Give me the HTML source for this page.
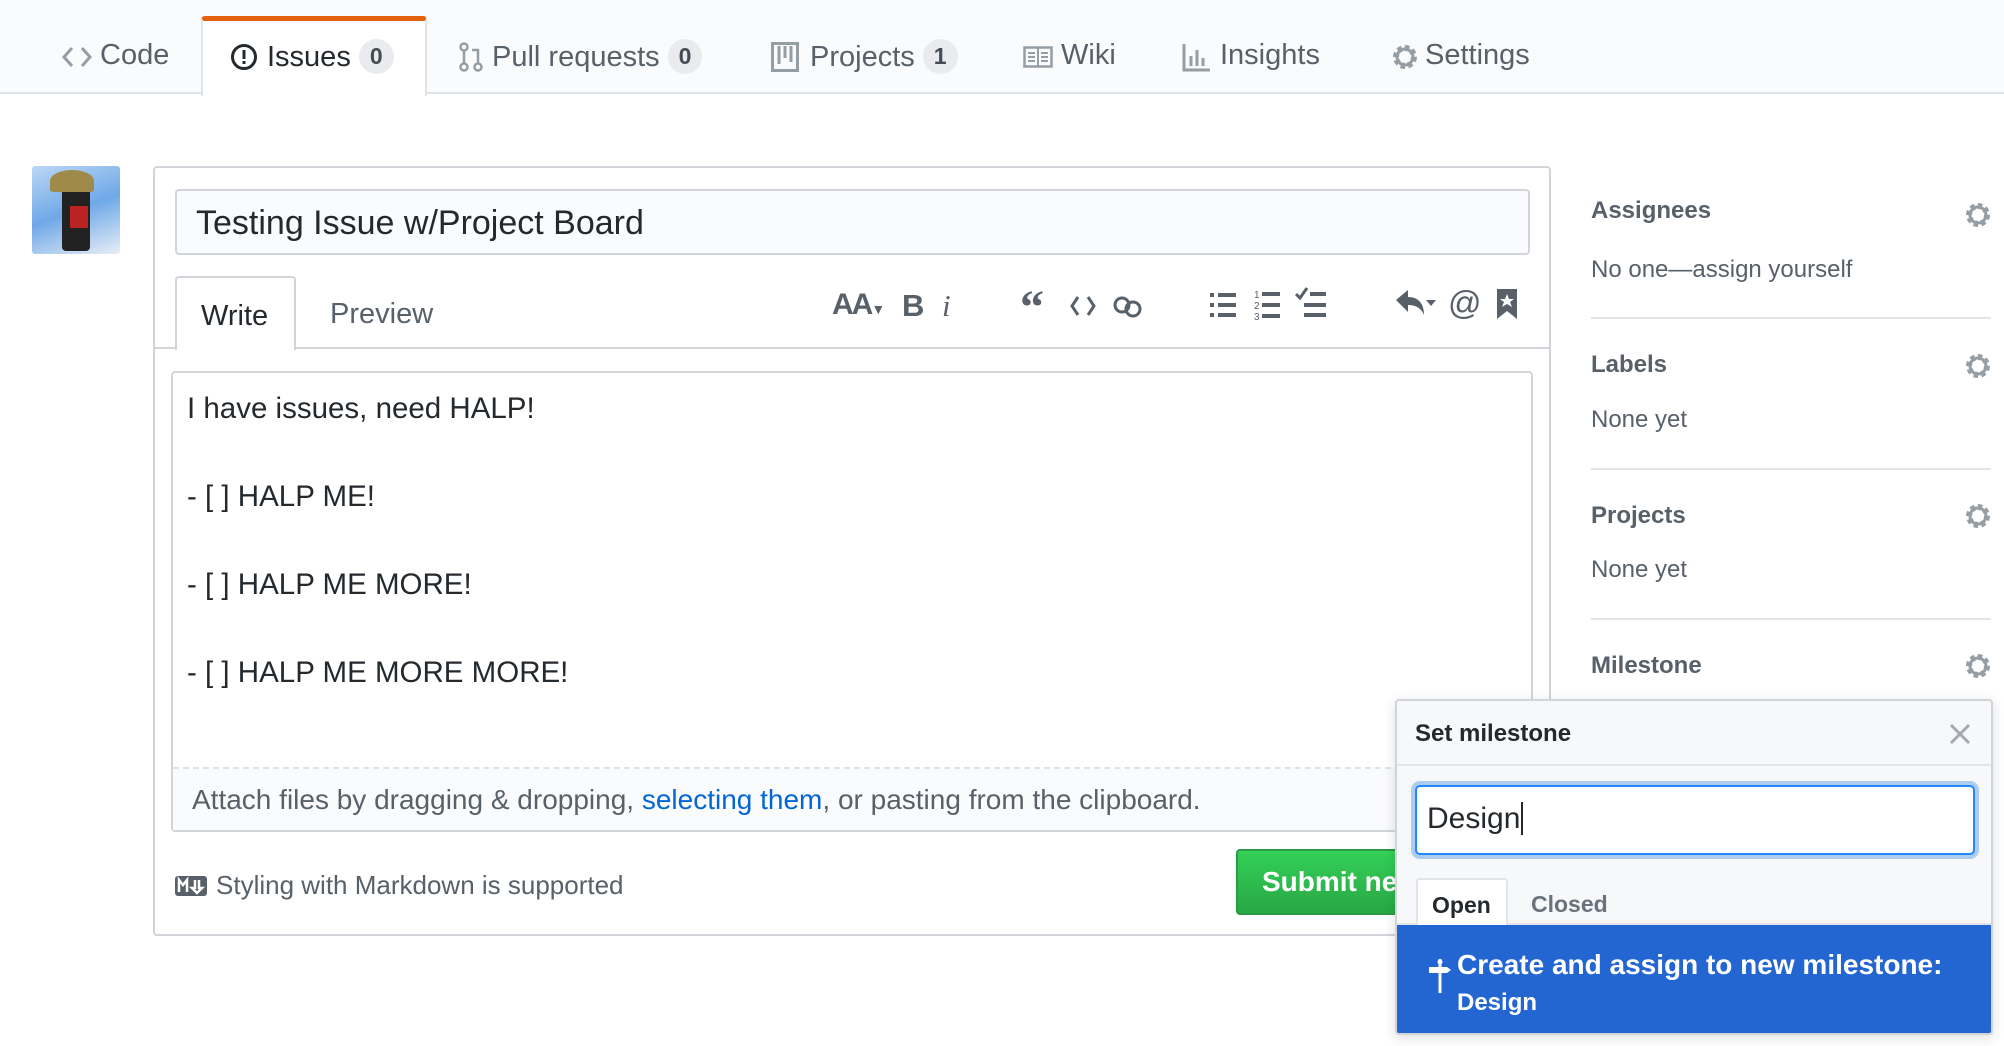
<!DOCTYPE html>
<html><head><meta charset="utf-8"><style>
*{box-sizing:border-box;margin:0;padding:0}
body{width:2004px;height:1046px;background:#fff;font-family:"Liberation Sans",Arial,sans-serif;color:#24292e;position:relative;overflow:hidden}
.a{position:absolute}
.nav{left:0;top:0;width:2004px;height:94px;background:#fafbfc;border-bottom:2px solid #e1e4e8}
.tab{font-size:29px;color:#586069;top:39px;white-space:nowrap}
.cnt{display:inline-block;background:#e9ebee;color:#444d56;border-radius:20px;font-size:23px;font-weight:bold;padding:4px 11px;vertical-align:2px;margin-left:8px}
.sh{font-size:24px;font-weight:bold;color:#586069}
.sv{font-size:24px;color:#586069}
.div{height:2px;background:#e1e4e8;left:1591px;width:400px}
</style></head><body>
<div class="a nav"></div>
<div class="a" style="left:201px;top:16px;width:226px;height:80px;background:#fff;border:2px solid #e1e4e8;border-top:5px solid #e36209;border-bottom:none;border-radius:4px 4px 0 0"></div>
<svg class="a" style="left:62px;top:46px" width="30" height="22" viewBox="0 0 30 22"><path d="M10 2L2 11l8 9M20 2l8 9-8 9" stroke="#959da5" stroke-width="3" fill="none"/></svg>
<div class="a tab" style="left:100px">Code</div>
<svg class="a" style="left:230px;top:43px" width="28" height="28"><circle cx="14" cy="14" r="11.5" stroke="#24292e" stroke-width="3" fill="none"/><rect x="12.5" y="7" width="3" height="9" fill="#24292e"/><rect x="12.5" y="18" width="3" height="3" fill="#24292e"/></svg>
<div class="a tab" style="left:267px;color:#24292e">Issues<span class="cnt">0</span></div>
<svg class="a" style="left:458px;top:42px" width="26" height="30"><circle cx="6" cy="5" r="3.5" stroke="#959da5" stroke-width="2.5" fill="none"/><circle cx="6" cy="25" r="3.5" stroke="#959da5" stroke-width="2.5" fill="none"/><circle cx="20" cy="25" r="3.5" stroke="#959da5" stroke-width="2.5" fill="none"/><path d="M6 9v12M20 21V8h-6" stroke="#959da5" stroke-width="2.5" fill="none"/></svg>
<div class="a tab" style="left:492px">Pull requests<span class="cnt">0</span></div>
<svg class="a" style="left:771px;top:42px" width="28" height="30"><rect x="1.5" y="1.5" width="25" height="27" stroke="#959da5" stroke-width="3" fill="none"/><path d="M8 4v18M14 4v12M20 4v16" stroke="#959da5" stroke-width="3"/></svg>
<div class="a tab" style="left:810px">Projects<span class="cnt">1</span></div>
<svg class="a" style="left:1023px;top:46px" width="30" height="22"><rect x="1.5" y="1.5" width="27" height="19" stroke="#959da5" stroke-width="2.5" fill="none"/><path d="M15 2v18M5 7h7M5 11h7M5 15h7M18 7h7M18 11h7M18 15h7" stroke="#959da5" stroke-width="2"/></svg>
<div class="a tab" style="left:1061px">Wiki</div>
<svg class="a" style="left:1182px;top:42px" width="30" height="30"><path d="M2 2v26h26" stroke="#959da5" stroke-width="3" fill="none"/><path d="M9 24V14M15 24V8M21 24V16" stroke="#959da5" stroke-width="3"/></svg>
<div class="a tab" style="left:1220px">Insights</div>
<svg class="a" style="left:1390px;top:42px" width="30" height="30" viewBox="0 0 30 30"><circle cx="15" cy="15" r="9" fill="none" stroke="#959da5" stroke-width="6" stroke-dasharray="4 3"/><circle cx="15" cy="15" r="8" fill="none" stroke="#959da5" stroke-width="3"/></svg>
<div class="a tab" style="left:1425px">Settings</div>

<div class="a" style="left:32px;top:166px;width:88px;height:88px;background:linear-gradient(160deg,#bcd7f5,#6fa8e8 50%,#e8eef5);border-radius:3px;overflow:hidden"><div class="a" style="left:30px;top:10px;width:28px;height:75px;background:#222;border-radius:12px 12px 4px 4px"></div><div class="a" style="left:18px;top:4px;width:44px;height:22px;background:#a08a4a;border-radius:50% 50% 10% 10%"></div><div class="a" style="left:38px;top:40px;width:18px;height:22px;background:#b22"></div></div>

<div class="a" style="left:153px;top:166px;width:1398px;height:770px;border:2px solid #d1d5da;border-radius:4px"></div>
<div class="a" style="left:175px;top:189px;width:1355px;height:66px;background:#fafbfc;border:2px solid #d1d5da;border-radius:4px;font-size:34px;padding:13px 19px">Testing Issue w/Project Board</div>
<div class="a" style="left:155px;top:347px;width:1394px;height:2px;background:#d1d5da"></div>
<div class="a" style="left:175px;top:276px;width:121px;height:74px;background:#fff;border:2px solid #d1d5da;border-bottom:none;border-radius:4px 4px 0 0;font-size:29px;padding:22px 0 0 24px">Write</div>
<div class="a" style="left:330px;top:298px;font-size:29px;color:#586069">Preview</div>
<div class="a" style="left:832px;top:288px;font-size:30px;color:#586069;font-weight:bold;letter-spacing:-2px">AA<span style="font-size:14px">▼</span></div>
<div class="a" style="left:902px;top:288px;font-size:31px;color:#586069;font-weight:bold">B</div>
<div class="a" style="left:942px;top:288px;font-size:31px;color:#586069;font-style:italic;font-family:'Liberation Serif',serif">i</div>
<div class="a" style="left:1020px;top:280px;font-size:48px;color:#586069;font-weight:bold;font-family:'Liberation Serif',serif">“</div>
<svg class="a" style="left:1070px;top:295px" width="26" height="22"><path d="M8 2L2 11l6 9M18 2l6 9-6 9" stroke="#586069" stroke-width="3" fill="none"/></svg>
<svg class="a" style="left:1112px;top:294px" width="32" height="26"><circle cx="10" cy="11" r="7" stroke="#586069" stroke-width="3" fill="none"/><circle cx="21" cy="15" r="7" stroke="#586069" stroke-width="3" fill="none"/></svg>
<svg class="a" style="left:1210px;top:290px" width="28" height="30"><g fill="#586069"><rect x="0" y="3" width="4" height="4"/><rect x="0" y="13" width="4" height="4"/><rect x="0" y="23" width="4" height="4"/><rect x="8" y="3" width="18" height="4"/><rect x="8" y="13" width="18" height="4"/><rect x="8" y="23" width="18" height="4"/></g></svg>
<svg class="a" style="left:1254px;top:288px" width="28" height="32"><g fill="#586069"><text x="0" y="10" font-size="10" font-family="Liberation Sans">1</text><text x="0" y="21" font-size="10" font-family="Liberation Sans">2</text><text x="0" y="32" font-size="10" font-family="Liberation Sans">3</text><rect x="8" y="4" width="18" height="4"/><rect x="8" y="15" width="18" height="4"/><rect x="8" y="26" width="18" height="4"/></g></svg>
<svg class="a" style="left:1294px;top:286px" width="34" height="34"><path d="M2 8l4 4 7-10" stroke="#586069" stroke-width="3" fill="none"/><g fill="#586069"><rect x="16" y="6" width="16" height="4"/><rect x="10" y="17" width="22" height="4"/><rect x="10" y="27" width="22" height="4"/></g></svg>
<svg class="a" style="left:1394px;top:288px" width="44" height="34"><path d="M2 12L14 2v7c10 0 16 6 16 18-3-7-8-10-16-10v7z" fill="#586069"/><path d="M32 12h10l-5 6z" fill="#586069"/></svg>
<div class="a" style="left:1448px;top:284px;font-size:33px;color:#586069">@</div>
<svg class="a" style="left:1496px;top:288px" width="22" height="32"><path d="M1 1h20v30l-10-8-10 8z" fill="#586069"/><path d="M11 6l2 5h5l-4 3 2 5-5-3-5 3 2-5-4-3h5z" fill="#fff"/></svg>

<div class="a" style="left:171px;top:371px;width:1362px;height:461px;border:2px solid #d1d5da;border-radius:4px"></div>
<div class="a" style="left:173px;top:767px;width:1358px;border-top:2px dashed #dfe2e5"></div>
<div class="a" style="left:173px;top:769px;width:1358px;height:61px;background:#fafbfc"></div>
<div class="a" style="left:187px;top:365px;font-size:29.5px;line-height:88px">I have issues, need HALP!<br>- [ ] HALP ME!<br>- [ ] HALP ME MORE!<br>- [ ] HALP ME MORE MORE!</div>
<div class="a" style="left:192px;top:784px;font-size:28px;color:#586069">Attach files by dragging &amp; dropping, <span style="color:#0366d6">selecting them</span>, or pasting from the clipboard.</div>
<svg class="a" style="left:175px;top:876px" width="32" height="20"><rect width="32" height="20" rx="3" fill="#586069"/><path d="M4 16V4l4 5 4-5v12M20 4v8h-3l5 5 5-5h-3V4" stroke="#fff" stroke-width="2.5" fill="none"/></svg>
<div class="a" style="left:216px;top:870px;font-size:26px;color:#586069">Styling with Markdown is supported</div>
<div class="a" style="left:1236px;top:849px;width:200px;height:66px;background:linear-gradient(#34d058,#28a745);border:2px solid #2a9c45;border-radius:4px;color:#fff;font-size:28px;font-weight:bold;padding:15px 24px;white-space:nowrap;overflow:hidden">Submit new issue</div>

<div class="a sh" style="left:1591px;top:197px">Assignees</div>
<div class="a sv" style="left:1591px;top:256px">No one—assign yourself</div>
<div class="a div" style="top:317px"></div>
<div class="a sh" style="left:1591px;top:351px">Labels</div>
<div class="a sv" style="left:1591px;top:406px">None yet</div>
<div class="a div" style="top:468px"></div>
<div class="a sh" style="left:1591px;top:502px">Projects</div>
<div class="a sv" style="left:1591px;top:556px">None yet</div>
<div class="a div" style="top:618px"></div>
<div class="a sh" style="left:1591px;top:652px">Milestone</div>
<svg class="a" style="left:1963px;top:200px" width="30" height="30"><circle cx="15" cy="15" r="9" fill="none" stroke="#959da5" stroke-width="6" stroke-dasharray="4 3"/><circle cx="15" cy="15" r="8" fill="none" stroke="#959da5" stroke-width="3"/></svg>
<svg class="a" style="left:1963px;top:351px" width="30" height="30"><circle cx="15" cy="15" r="9" fill="none" stroke="#959da5" stroke-width="6" stroke-dasharray="4 3"/><circle cx="15" cy="15" r="8" fill="none" stroke="#959da5" stroke-width="3"/></svg>
<svg class="a" style="left:1963px;top:501px" width="30" height="30"><circle cx="15" cy="15" r="9" fill="none" stroke="#959da5" stroke-width="6" stroke-dasharray="4 3"/><circle cx="15" cy="15" r="8" fill="none" stroke="#959da5" stroke-width="3"/></svg>
<svg class="a" style="left:1963px;top:651px" width="30" height="30"><circle cx="15" cy="15" r="9" fill="none" stroke="#959da5" stroke-width="6" stroke-dasharray="4 3"/><circle cx="15" cy="15" r="8" fill="none" stroke="#959da5" stroke-width="3"/></svg>

<div class="a" style="left:1395px;top:699px;width:598px;height:336px;background:#f6f8fa;border:2px solid #d1d5da;border-radius:4px;box-shadow:0 3px 12px rgba(27,31,35,.15);overflow:hidden">
<div class="a" style="left:18px;top:19px;font-size:24px;font-weight:bold">Set milestone</div>
<svg class="a" style="left:552px;top:22px" width="22" height="22"><path d="M2 2l18 18M20 2L2 20" stroke="#a3aab1" stroke-width="3"/></svg>
<div class="a" style="left:0;top:63px;width:600px;height:2px;background:#e1e4e8"></div>
<div class="a" style="left:18px;top:84px;width:560px;height:70px;background:#fff;border:2px solid #2188ff;border-radius:5px;box-shadow:0 0 0 4px rgba(3,102,214,.3);font-size:30px;padding:15px 10px">Design<span style="border-left:2px solid #24292e;margin-left:1px"></span></div>
<div class="a" style="left:0;top:222px;width:600px;height:2px;background:#e1e4e8"></div>
<div class="a" style="left:19px;top:177px;width:92px;height:48px;background:#fff;border:2px solid #e1e4e8;border-bottom:none;border-radius:4px 4px 0 0;font-size:23px;font-weight:bold;padding:12px 0 0 14px">Open</div>
<div class="a" style="left:134px;top:190px;font-size:23px;font-weight:bold;color:#6a737d">Closed</div>
<div class="a" style="left:0;top:224px;width:600px;height:112px;background:#2366d1"></div>
<svg class="a" style="left:31px;top:258px" width="24" height="34"><path d="M12 0v34" stroke="#fff" stroke-width="3"/><path d="M1 8h18l4 3-4 3H1z" fill="#fff"/><circle cx="12" cy="3" r="2.5" fill="#fff"/></svg>
<div class="a" style="left:60px;top:248px;font-size:28px;font-weight:bold;color:#fff">Create and assign to new milestone:</div>
<div class="a" style="left:60px;top:288px;font-size:24px;font-weight:bold;color:#fff">Design</div>
</div>
</body></html>
